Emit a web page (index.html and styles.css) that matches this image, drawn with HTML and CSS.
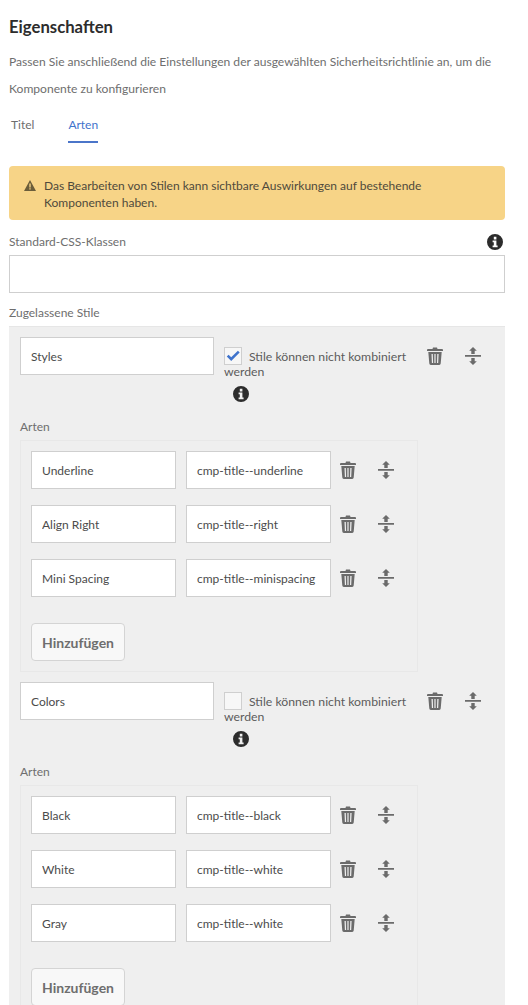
FILE: index.html
```html
<!DOCTYPE html>
<html lang="de">
<head>
  <meta charset="utf-8" />
  <title>Eigenschaften</title>
  <link rel="stylesheet" href="styles.css">
</head>
<body>
<svg class="sprites" width="0" height="0">
  <symbol id="i-trash" viewBox="0 0 16 18">
    <path d="M5.500 2 6 .5h4l.5 1.500H15a1 1 0 0 1 1 1v1H0V3a1 1 0 0 1 1-1z"/>
    <path fill-rule="evenodd" d="M1.300 5h13.400l-1 11.600a1.500 1.500 0 0 1-1.500 1.400H3.800a1.500 1.500 0 0 1-1.500-1.400zM4.500 7l.4 9h1.200l-.3-9zm2.900 0v9h1.200V7zm2.900 0-.3 9h1.200l.4-9z"/>
  </symbol>
  <symbol id="i-move" viewBox="0 0 16 18">
    <path d="M8 0l3.800 3.800H9.700V7H6.300V3.800H4.200zM0 8h16v1.800H0zM6.300 11h3.400v3.200h2.100L8 18l-3.800-3.800h2.100z"/>
  </symbol>
  <symbol id="i-info" viewBox="0 0 16 16">
    <path fill-rule="evenodd" d="M8 0a8 8 0 1 1 0 16A8 8 0 0 1 8 0zM6.800 2.800v2.600h2.600V2.800zM5.600 6.600v1.700h1.200v3.200H5.600v1.700h5v-1.700H9.400V6.600z"/>
  </symbol>
</svg>

<h1 class="title">Eigenschaften</h1>
<p class="intro">Passen Sie anschließend die Einstellungen der ausgewählten Sicherheitsrichtlinie an, um die<br>Komponente zu konfigurieren</p>

<nav class="tabs">
  <a class="tab">Titel</a>
  <a class="tab tab-active">Arten</a>
</nav>

<div class="alert">
  <svg class="alert-icon" viewBox="0 0 12 11"><path fill-rule="evenodd" d="M6 0l6 11H0zM5.300 3.500v4h1.400v-4zm0 4.800v1.300h1.400V8.300z"/></svg>
  <span>Das Bearbeiten von Stilen kann sichtbare Auswirkungen auf bestehende Komponenten haben.</span>
</div>

<div class="label-row">
  <label class="label">Standard-CSS-Klassen</label>
  <svg class="info"><use href="#i-info"/></svg>
</div>
<input class="field field-wide" type="text">

<label class="label label-allowed">Zugelassene Stile</label>

<div class="groups">
  <section class="group">
    <div class="group-head">
      <input class="field field-name" type="text" value="Styles">
      <div class="combine">
        <span class="combine-line"><span class="check check-on"><svg viewBox="0 0 18 18"><path d="M2 9.500l2-2 3 3L14.500 3l2 2L7 14.500z"/></svg></span>Stile können nicht kombiniert</span>
        <span class="combine-wrap">werden</span>
        <svg class="info info-combine"><use href="#i-info"/></svg>
      </div>
      <button class="icon-btn first"><svg><use href="#i-trash"/></svg></button>
      <button class="icon-btn"><svg><use href="#i-move"/></svg></button>
    </div>
    <div class="sub-label">Arten</div>
    <div class="items">
      <div class="item">
        <input class="field" type="text" value="Underline">
        <input class="field" type="text" value="cmp-title--underline">
        <button class="icon-btn first"><svg><use href="#i-trash"/></svg></button>
        <button class="icon-btn"><svg><use href="#i-move"/></svg></button>
      </div>
      <div class="item">
        <input class="field" type="text" value="Align Right">
        <input class="field" type="text" value="cmp-title--right">
        <button class="icon-btn first"><svg><use href="#i-trash"/></svg></button>
        <button class="icon-btn"><svg><use href="#i-move"/></svg></button>
      </div>
      <div class="item">
        <input class="field" type="text" value="Mini Spacing">
        <input class="field" type="text" value="cmp-title--minispacing">
        <button class="icon-btn first"><svg><use href="#i-trash"/></svg></button>
        <button class="icon-btn"><svg><use href="#i-move"/></svg></button>
      </div>
      <button class="add">Hinzufügen</button>
    </div>
  </section>

  <section class="group">
    <div class="group-head">
      <input class="field field-name" type="text" value="Colors">
      <div class="combine">
        <span class="combine-line"><span class="check"></span>Stile können nicht kombiniert</span>
        <span class="combine-wrap">werden</span>
        <svg class="info info-combine"><use href="#i-info"/></svg>
      </div>
      <button class="icon-btn first"><svg><use href="#i-trash"/></svg></button>
      <button class="icon-btn"><svg><use href="#i-move"/></svg></button>
    </div>
    <div class="sub-label">Arten</div>
    <div class="items">
      <div class="item">
        <input class="field" type="text" value="Black">
        <input class="field" type="text" value="cmp-title--black">
        <button class="icon-btn first"><svg><use href="#i-trash"/></svg></button>
        <button class="icon-btn"><svg><use href="#i-move"/></svg></button>
      </div>
      <div class="item">
        <input class="field" type="text" value="White">
        <input class="field" type="text" value="cmp-title--white">
        <button class="icon-btn first"><svg><use href="#i-trash"/></svg></button>
        <button class="icon-btn"><svg><use href="#i-move"/></svg></button>
      </div>
      <div class="item">
        <input class="field" type="text" value="Gray">
        <input class="field" type="text" value="cmp-title--white">
        <button class="icon-btn first"><svg><use href="#i-trash"/></svg></button>
        <button class="icon-btn"><svg><use href="#i-move"/></svg></button>
      </div>
      <button class="add">Hinzufügen</button>
    </div>
  </section>
</div>
</body>
</html>
```

FILE: styles.css
```css
html,body{margin:0;height:100%;overflow:hidden;background:#fff}
body{padding:0 23px 0 9px;font:12px/16px Lato,sans-serif;color:#6e6e6e;box-sizing:border-box}
.sprites{position:absolute}

.title{margin:0;padding-top:16px;font-size:16.7px;line-height:22px;font-weight:700;color:#2c2c2c}
.intro{margin:10px 0 0;font-size:12.08px;line-height:27px;color:#6e6e6e}

.tabs{display:flex;gap:34px;margin:13px 0 0 2px;height:28px}
.tab{display:block;height:26px;line-height:20px}
.tab-active{color:#3f73cc;border-bottom:2px solid #4b75c9}

.alert{display:flex;margin-top:23px;height:54px;box-sizing:border-box;padding:11px 20px 0 15px;
       background:#f7d487;border-radius:4px;color:#4f4a3c;line-height:17px}
.alert-icon{width:12px;height:11px;flex:none;margin:3px 8px 0 0;fill:#6b5d3a}

.label-row{display:flex;justify-content:space-between;align-items:center;margin-top:13px;height:18px}
.label{display:block;color:#6e6e6e}
.label-allowed{margin-top:12px;height:21px;line-height:16px}

.info{width:16px;height:16px;fill:#2c2c2c;flex:none;margin-right:2px}

.field{display:block;box-sizing:border-box;height:38px;margin:0;padding:0 10px;background:#fff;
       border:1px solid #cfcfcf;border-radius:0;outline:0;font:12px Lato,sans-serif;color:#4b4b4b;width:145px}
.field-wide{width:100%;margin-top:4px}
.field-name{width:194px}

.groups{background:#efefef;padding:10px 0 0 11px;border-top:1px solid #e6e6e6;height:700px;box-sizing:border-box}
.group-head{display:flex;height:82px}
.combine{width:203px;margin-left:10px;padding-top:10px;font-size:12.25px;line-height:15px;color:#5c5c5c}
.combine-line{display:flex;align-items:center;white-space:nowrap;height:18px}
.combine-wrap{display:block;margin-top:-1px}
.check{width:18px;height:18px;box-sizing:border-box;border:1px solid #cfcfcf;background:#f7f7f7;margin-right:7px;flex:none}
.check svg{display:block;width:16px;height:16px;fill:#3f73cc}
.info-combine{display:block;margin:7px 0 0 9px}

.icon-btn{padding:0;border:0;background:none;width:16px;height:18px;margin:10px 0 0 22px;flex:none}
.icon-btn.first{margin-left:0}
.icon-btn svg{display:block;width:16px;height:18px;fill:#6b6b6b}

.sub-label{height:21px;line-height:16px;color:#6e6e6e}
.items{width:398px;box-sizing:border-box;border:1px solid #e8e8e8;padding:10px 0 10px 10px;margin-bottom:10px}
.item{display:flex;gap:10px;height:38px;margin-bottom:16px}
.item .icon-btn{margin-left:12px}
.item .icon-btn.first{margin-left:-1px}
.add{display:block;width:94px;height:38px;margin-top:26px;padding:0;background:#f8f8f8;border:1px solid #d4d4d4;
     border-radius:4px;font:700 14px Lato,sans-serif;color:#6e6e6e}
```
